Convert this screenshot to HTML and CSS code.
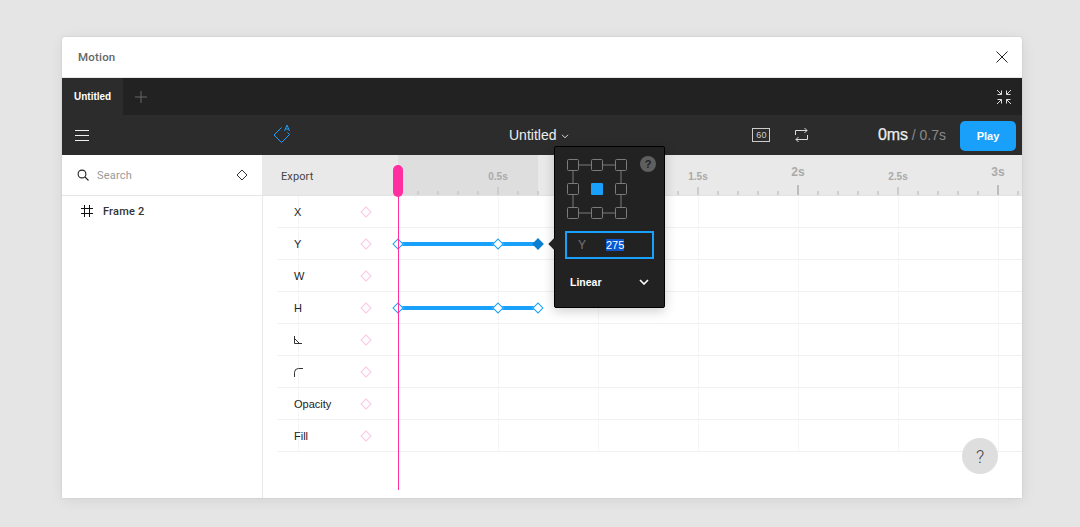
FILE: index.html
```html
<!DOCTYPE html>
<html lang="en">
<head>
<meta charset="utf-8">
<title>Motion</title>
<link rel="stylesheet" href="styles.css">
</head>
<body>
<div class="window">
  <header class="titlebar">
    <span class="title">Motion</span>
    <svg class="close" width="14" height="14" viewBox="0 0 14 14"><path d="M1.500 1.500l11 11M12.500 1.500l-11 11" stroke="#222" stroke-width="1" fill="none"/></svg>
  </header>
  <div class="tabs">
    <div class="tab">Untitled</div>
    <svg class="plus" width="12" height="12" viewBox="0 0 12 12"><path d="M6 0v12M0 6h12" stroke="#666" stroke-width="1" fill="none"/></svg>
    <svg class="collapse" width="16" height="16" viewBox="0 0 16 16" fill="none" stroke="#ddd" stroke-width="1"><path d="M1 1l4.500 4.500M1.500 5.500h4v-4M15 1l-4.500 4.500M14.500 5.500h-4v-4M1 15l4.500-4.500M1.500 10.500h4v4M15 15l-4.500-4.500M14.500 10.500h-4v4"/></svg>
  </div>
  <div class="toolbar">
    <svg class="menu" width="14" height="11" viewBox="0 0 14 11"><path d="M0 .5h14M0 5.500h14M0 10.500h14" stroke="#eee" stroke-width="1" fill="none"/></svg>
    <svg class="logo" width="20" height="20" viewBox="0 0 20 20" fill="none" stroke="#18a0fb" stroke-width="1"><path d="M8.500 3.500L1 11l7.500 7.500 8-8-2-2"/><path d="M11.500 7l2.500-6 2.500 6M12.500 5h3"/></svg>
    <div class="doc-name">Untitled<svg class="chev" width="8" height="5" viewBox="0 0 8 5"><path d="M1 .8L4 3.800 7 .8" stroke="#ddd" stroke-width="1" fill="none"/></svg></div>
    <span class="fps">60</span>
    <svg class="loop" width="13" height="18" viewBox="0 0 13 18" fill="none" stroke="#ddd" stroke-width="1"><path d="M.5 9V4.500H12M9.500 2L12 4.500 9.500 7M12.500 9v4.500H1M3.500 11L1 13.500 3.500 16"/></svg>
    <div class="time"><span class="now">0ms</span> <span class="total">/ 0.7s</span></div>
    <button class="play">Play</button>
  </div>
  <div class="main">
    <aside class="side">
      <div class="search">
        <svg class="mag" width="12" height="12" viewBox="0 0 12 12" fill="none" stroke="#222" stroke-width="1.100"><circle cx="5" cy="5" r="3.900"/><path d="M8 8l3.500 3.500"/></svg>
        <span class="search-text">Search</span>
        <svg class="side-diamond" width="12" height="12" viewBox="0 0 12 12"><path d="M6 1l5 5-5 5-5-5z" fill="none" stroke="#333" stroke-width="1"/></svg>
      </div>
      <div class="layer">
        <svg class="hash" width="12" height="12" viewBox="0 0 12 12"><path d="M3.500 0v12M8.500 0v12M0 3.500h12M0 8.500h12" stroke="#111" stroke-width="1" fill="none"/></svg>
        <span>Frame 2</span>
      </div>
    </aside>
    <section class="timeline">
      <div class="ruler">
        <span class="export">Export</span>
        <div class="range"></div>
        <div class="ticks"></div>
        <span class="mark big at-0">0</span>
        <span class="mark at-05">0.5s</span>
        <span class="mark at-15">1.5s</span>
        <span class="mark big at-2">2s</span>
        <span class="mark at-25">2.5s</span>
        <span class="mark big at-3">3s</span>
      </div>
      <div class="rows">
        <div class="row"><span class="label">X</span><i class="dia"></i></div>
        <div class="row"><span class="label">Y</span><i class="dia"></i>
          <div class="bar bar-long"></div>
          <i class="key k0"></i><i class="key k1"></i><i class="key k2 on"></i>
        </div>
        <div class="row"><span class="label">W</span><i class="dia"></i></div>
        <div class="row"><span class="label">H</span><i class="dia"></i>
          <div class="bar bar-long"></div>
          <i class="key k0"></i><i class="key k1"></i><i class="key k2"></i>
        </div>
        <div class="row"><span class="label"><svg width="8" height="8" viewBox="0 0 8 8" fill="none" stroke="#333" stroke-width="1"><path d="M.5 0v7.500H8M.5 2.500L5.500 7.500"/></svg></span><i class="dia"></i></div>
        <div class="row"><span class="label"><svg width="9" height="9" viewBox="0 0 9 9" fill="none" stroke="#333" stroke-width="1"><path d="M.5 9V4.500Q.5.500 4.500.500H9"/></svg></span><i class="dia"></i></div>
        <div class="row"><span class="label">Opacity</span><i class="dia"></i></div>
        <div class="row"><span class="label">Fill</span><i class="dia"></i></div>
      </div>
      <div class="playhead"><div class="handle"></div></div>
      <div class="popover">
        <i class="caret"></i>
        <div class="pop-top">
          <svg class="anchors" width="60" height="60" viewBox="0 0 60 60" fill="none" stroke="#7b7b7b" stroke-width="1">
            <path d="M6 6h48v48H6z"/>
            <g fill="#222"><rect x=".5" y=".5" width="11" height="11" rx="1"/><rect x="24.500" y=".5" width="11" height="11" rx="1"/><rect x="48.500" y=".5" width="11" height="11" rx="1"/><rect x=".5" y="24.500" width="11" height="11" rx="1"/><rect x="48.500" y="24.500" width="11" height="11" rx="1"/><rect x=".5" y="48.500" width="11" height="11" rx="1"/><rect x="24.500" y="48.500" width="11" height="11" rx="1"/><rect x="48.500" y="48.500" width="11" height="11" rx="1"/></g>
            <rect x="24" y="24" width="12" height="12" rx="1" fill="#18a0fb" stroke="none"/>
          </svg>
          <span class="qmark">?</span>
        </div>
        <div class="field"><span class="field-name">Y</span><span class="field-value">275</span></div>
        <div class="ease"><span>Linear</span><svg width="10" height="6" viewBox="0 0 10 6"><path d="M1 1l4 4 4-4" stroke="#fff" stroke-width="1.600" fill="none"/></svg></div>
      </div>
      <button class="help">?</button>
    </section>
  </div>
</div>
</body>
</html>
```

FILE: styles.css
```css
* { box-sizing: border-box; }
html, body { margin: 0; height: 100%; }
body {
  background: #e5e5e5;
  padding: 37px 58px 29px 62px;
  font-family: Roboto, "Liberation Sans", sans-serif;
  overflow: hidden;
}
.window {
  width: 960px;
  height: 461px;
  background: #fff;
  display: flex;
  flex-direction: column;
  border-radius: 2px 2px 0 0;
  box-shadow: 0 0 1px rgba(0,0,0,.35), 1px 2px 14px rgba(0,0,0,.08);
  overflow: hidden;
}
.titlebar {
  height: 41px;
  flex: none;
  display: flex;
  align-items: center;
  justify-content: space-between;
  padding: 0 13px 0 16px;
  border-bottom: 1px solid #e8e8e8;
}
.title { font-size: 11.500px; font-weight: 500; color: #666; letter-spacing: .2px; }
.tabs {
  height: 37px;
  flex: none;
  background: #222;
  display: flex;
  align-items: center;
  padding-right: 10px;
}
.tab {
  height: 37px;
  width: 61px;
  background: #2c2c2c;
  color: #fff;
  font: 700 10px/37px "Liberation Sans", sans-serif;
  padding-left: 12px;
}
.plus { margin-left: 12px; }
.collapse { margin-left: auto; }
.toolbar {
  height: 40px;
  flex: none;
  background: #2c2c2c;
  display: flex;
  align-items: center;
  padding-right: 6px;
  color: #fff;
  font-family: "Liberation Sans", sans-serif;
}
.menu { margin-left: 13px; }
.logo { margin-left: 184px; margin-top: -2px; }
.doc-name {
  margin-left: 216px;
  font-size: 14px;
  color: #eee;
  display: flex;
  align-items: center;
}
.chev { margin-left: 5px; margin-top: 2px; }
.fps {
  margin-left: 183px;
  width: 18px;
  height: 14px;
  border: 1px solid #ccc;
  font-size: 9px;
  color: #ccc;
  text-align: center;
  line-height: 12px;
  letter-spacing: .3px;
}
.loop { margin-left: 25px; }
.time { margin-left: auto; font-size: 14px; color: #888; white-space: nowrap; }
.now { font-size: 16px; color: #eee; letter-spacing: -.1px; -webkit-text-stroke: .25px #eee; }
.total { color: #8a8a8a; }
.play {
  margin-left: 14px;
  margin-top: 2px;
  width: 56px;
  height: 30px;
  border: 0;
  border-radius: 5px;
  background: #18a0fb;
  color: #fff;
  font: 700 11px "Liberation Sans", sans-serif;
  padding: 0;
}
.main { flex: 1; display: flex; min-height: 0; }
.side { width: 201px; flex: none; border-right: 1px solid #e8e8e8; }
.search {
  height: 41px;
  display: flex;
  align-items: center;
  padding: 0 14px 0 15px;
  border-bottom: 1px solid #e5e5e5;
}
.search-text { margin-left: 8px; font-size: 11px; color: #999; letter-spacing: .2px; }
.side-diamond { margin-left: auto; }
.layer {
  height: 30px;
  display: flex;
  align-items: center;
  padding-left: 19px;
  font-size: 11px;
  font-weight: 500;
  color: #333;
  letter-spacing: .2px;
}
.layer span { margin-left: 10px; }
.timeline { flex: 1; position: relative; min-width: 0; }
.ruler { height: 41px; background: #e9e9e9; border-bottom: 1px solid #e2e2e2; position: relative; overflow: hidden; }
.export { position: absolute; left: 18px; top: 15px; font-size: 11px; color: #444; letter-spacing: .1px; }
.range { position: absolute; left: 135px; width: 140px; top: 0; bottom: 0; background: #dedede; }
.ticks {
  position: absolute;
  left: 134px;
  right: 0;
  bottom: 0;
  height: 10px;
  background-repeat: repeat-x;
  background-position: 0 0, 0 2px, 0 6px;
  background-size: 200px 10px, 100px 8px, 20px 4px;
  background-image:
    linear-gradient(90deg, #bdbdbd 2px, transparent 2px),
    linear-gradient(90deg, #cdcdcd 2px, transparent 2px),
    linear-gradient(90deg, #cfcfcf 2px, transparent 2px);
}
.mark { position: absolute; width: 40px; text-align: center; top: 16px; font: 700 10px "Liberation Sans", sans-serif; color: #aaa; }
.mark.big { top: 10px; font-size: 12px; }
.at-0 { left: 115px; }
.at-05 { left: 215px; }
.at-15 { left: 415px; }
.at-2 { left: 515px; }
.at-25 { left: 615px; }
.at-3 { left: 715px; }
.rows {
  padding-left: 15px;
  background-image: linear-gradient(90deg, #f6f6f6 1px, transparent 1px);
  background-size: 100px 100%;
  background-position: 135px 0;
}
.row {
  height: 32px;
  padding-top: 1px;
  border-bottom: 1px solid #f0f0f0;
  position: relative;
  display: flex;
  align-items: center;
}
.label { margin-left: 16px; width: 68px; font: 11px "Liberation Sans", sans-serif; color: #222; display: flex; }
.dia { width: 8px; height: 8px; transform: rotate(45deg); border: 1px solid #fbc6e2; }
.bar { position: absolute; top: 14px; left: 120px; height: 4px; background: #18a0fb; }
.bar-long { width: 140px; }
.key {
  position: absolute;
  top: 12px;
  width: 8px;
  height: 8px;
  transform: rotate(45deg);
  border: 1px solid #18a0fb;
  background: #fff;
}
.k0 { left: 116px; }
.k1 { left: 216px; }
.k2 { left: 256px; }
.key.on { background: #0d7fd1; border-color: #0d7fd1; }
.playhead { position: absolute; left: 135px; top: 10px; height: 325px; width: 1px; background: #ff2fa0; }
.handle { position: absolute; left: -5px; top: 0; width: 10px; height: 32px; border-radius: 5px; background: #ff2fa0; }
.popover {
  position: absolute;
  left: 291px;
  top: -9px;
  width: 111px;
  height: 162px;
  background: #222;
  border: 1px solid #000;
  border-radius: 2px;
  box-shadow: 0 3px 12px rgba(0,0,0,.2);
  padding: 12px 10px 0;
  color: #fff;
  font-family: "Liberation Sans", sans-serif;
}
.caret {
  position: absolute;
  left: -5px;
  top: 93px;
  width: 8px;
  height: 8px;
  background: #222;
  transform: rotate(45deg);
}
.pop-top { display: flex; align-items: flex-start; height: 72px; }
.anchors { margin-left: 2px; display: block; flex: none; }
.qmark {
  flex: none;
  margin-left: 13px;
  margin-top: -3px;
  width: 16px;
  height: 16px;
  border-radius: 50%;
  background: #5f5f5f;
  color: #222;
  font-size: 11px;
  font-weight: 700;
  line-height: 16px;
  text-align: center;
}
.field {
  width: 89px;
  height: 28px;
  border: 2px solid #18a0fb;
  display: flex;
  align-items: center;
  font-size: 11px;
  padding-left: 11px;
}
.field-name { color: #777; width: 28px; font-size: 12px; }
.field-value { background: #0b57d0; color: #fff; line-height: 12px; }
.ease {
  margin-top: 17px;
  display: flex;
  align-items: center;
  justify-content: space-between;
  padding: 0 5px 0 5px;
  font-size: 10.500px;
  font-weight: 700;
}
.help {
  position: absolute;
  left: 699px;
  top: 283px;
  width: 36px;
  height: 36px;
  border-radius: 50%;
  border: 0;
  padding: 0;
  background: #dedede;
  color: #444;
  font: 300 18px Roboto, sans-serif;
}
```
